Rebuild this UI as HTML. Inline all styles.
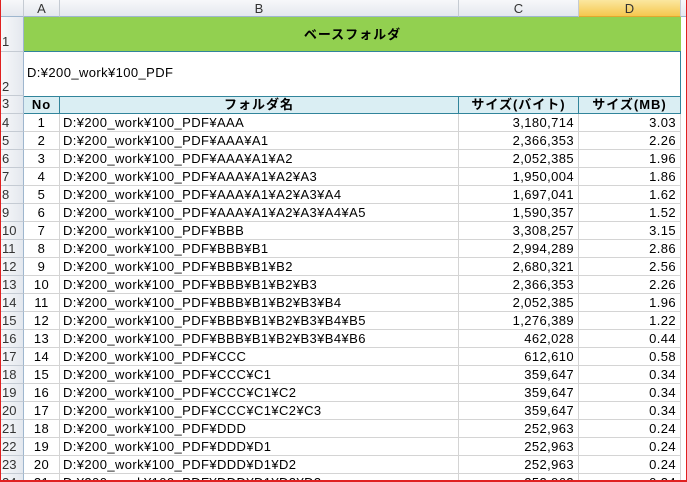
<!DOCTYPE html>
<html><head><meta charset="utf-8"><style>
*{margin:0;padding:0;box-sizing:border-box}
html,body{width:687px;height:482px;overflow:hidden}
body{background:#fff;position:relative;font-family:"Liberation Sans","Noto Sans CJK JP",sans-serif;font-size:13px;color:#000}
#wrap{position:absolute;left:0;top:0;width:687px;height:482px;overflow:hidden}
#wrap div{position:absolute}
.ch{top:0;height:17px;background:linear-gradient(#f7f8fa,#e4e8ee);border-right:1px solid #c5cbd3;border-bottom:1px solid #9eb6ce;color:#333;text-align:center;line-height:17px;font-size:13px}
.rh{left:1px;width:23px;background:linear-gradient(90deg,#f7f8fa,#e4e8ee);border-bottom:1px solid #c5cbd3;border-right:1px solid #9eb6ce;color:#333;font-size:13px;padding-left:1px;padding-top:2px}
.c{height:18px;line-height:18px;border-right:1px solid #d4d4d4;border-bottom:1px solid #d4d4d4;white-space:nowrap;overflow:hidden;letter-spacing:0.4px}
.hd{letter-spacing:1px}
</style></head><body><div id="wrap">
<div class="ch" style="left:1px;width:23px"></div>
<div class="ch" style="left:24px;width:36px">A</div>
<div class="ch" style="left:60px;width:399px">B</div>
<div class="ch" style="left:459px;width:120px">C</div>
<div class="ch" style="left:579px;width:102px;background:linear-gradient(#fbe7a0,#f5c74e);border-bottom:1px solid #e0a830">D</div>
<div class="ch" style="left:681px;width:6px;border-right:none"></div>

<div class="rh" style="top:17px;height:35px;padding-top:17px">1</div>
<div class="rh" style="top:52px;height:44px;padding-top:27px">2</div>
<div class="rh" style="top:96px;height:18px;padding-top:0">3</div>

<div class="hd" style="left:24px;top:17px;width:657px;height:35px;background:#92d050;border-bottom:1px solid #31849b;text-align:center;line-height:35px;font-weight:bold">ベースフォルダ</div>
<div style="left:24px;top:52px;width:657px;height:44px;border-right:1px solid #31849b;padding-left:3px;padding-top:13px;letter-spacing:0.4px">D:¥200_work¥100_PDF</div>
<div style="left:24px;top:96px;width:657px;height:18px;background:#daeef3;border-top:1px solid #31849b;border-bottom:1px solid #31849b"></div>
<div class="hd" style="left:24px;top:96px;width:36px;height:18px;line-height:18px;text-align:center;font-weight:bold;border-right:1px solid #31849b">No</div>
<div class="hd" style="left:60px;top:96px;width:399px;height:18px;line-height:18px;text-align:center;font-weight:bold;border-right:1px solid #31849b">フォルダ名</div>
<div class="hd" style="left:459px;top:96px;width:120px;height:18px;line-height:18px;text-align:center;font-weight:bold;border-right:1px solid #31849b">サイズ(バイト)</div>
<div class="hd" style="left:579px;top:96px;width:102px;height:18px;line-height:18px;text-align:center;font-weight:bold;border-right:1px solid #31849b">サイズ(MB)</div>

<div id="rows" style="left:0;top:0;width:687px;height:482px"></div>
<div style="left:0;top:0;width:687px;height:482px;border:1px solid #e02020;border-top:none;border-bottom:2px solid #e02020"></div>
</div>
<script>
var d=[["AAA","3,180,714","3.03"],["AAA¥A1","2,366,353","2.26"],["AAA¥A1¥A2","2,052,385","1.96"],["AAA¥A1¥A2¥A3","1,950,004","1.86"],["AAA¥A1¥A2¥A3¥A4","1,697,041","1.62"],["AAA¥A1¥A2¥A3¥A4¥A5","1,590,357","1.52"],["BBB","3,308,257","3.15"],["BBB¥B1","2,994,289","2.86"],["BBB¥B1¥B2","2,680,321","2.56"],["BBB¥B1¥B2¥B3","2,366,353","2.26"],["BBB¥B1¥B2¥B3¥B4","2,052,385","1.96"],["BBB¥B1¥B2¥B3¥B4¥B5","1,276,389","1.22"],["BBB¥B1¥B2¥B3¥B4¥B6","462,028","0.44"],["CCC","612,610","0.58"],["CCC¥C1","359,647","0.34"],["CCC¥C1¥C2","359,647","0.34"],["CCC¥C1¥C2¥C3","359,647","0.34"],["DDD","252,963","0.24"],["DDD¥D1","252,963","0.24"],["DDD¥D1¥D2","252,963","0.24"],["DDD¥D1¥D2¥D3","252,963","0.24"]];
var h="";
for(var i=0;i<d.length;i++){var t=114+i*18;
h+='<div class="rh" style="top:'+t+'px;height:18px;padding-top:0;line-height:18px">'+(i+4)+'</div>';
h+='<div class="c" style="left:24px;top:'+t+'px;width:36px;text-align:center">'+(i+1)+'</div>';
h+='<div class="c" style="left:60px;top:'+t+'px;width:399px;padding-left:3px">D:¥200_work¥100_PDF¥'+d[i][0]+'</div>';
h+='<div class="c" style="left:459px;top:'+t+'px;width:120px;text-align:right;padding-right:4px">'+d[i][1]+'</div>';
h+='<div class="c" style="left:579px;top:'+t+'px;width:102px;text-align:right;padding-right:4px">'+d[i][2]+'</div>';}
document.getElementById("rows").innerHTML=h;
</script>
</body></html>
